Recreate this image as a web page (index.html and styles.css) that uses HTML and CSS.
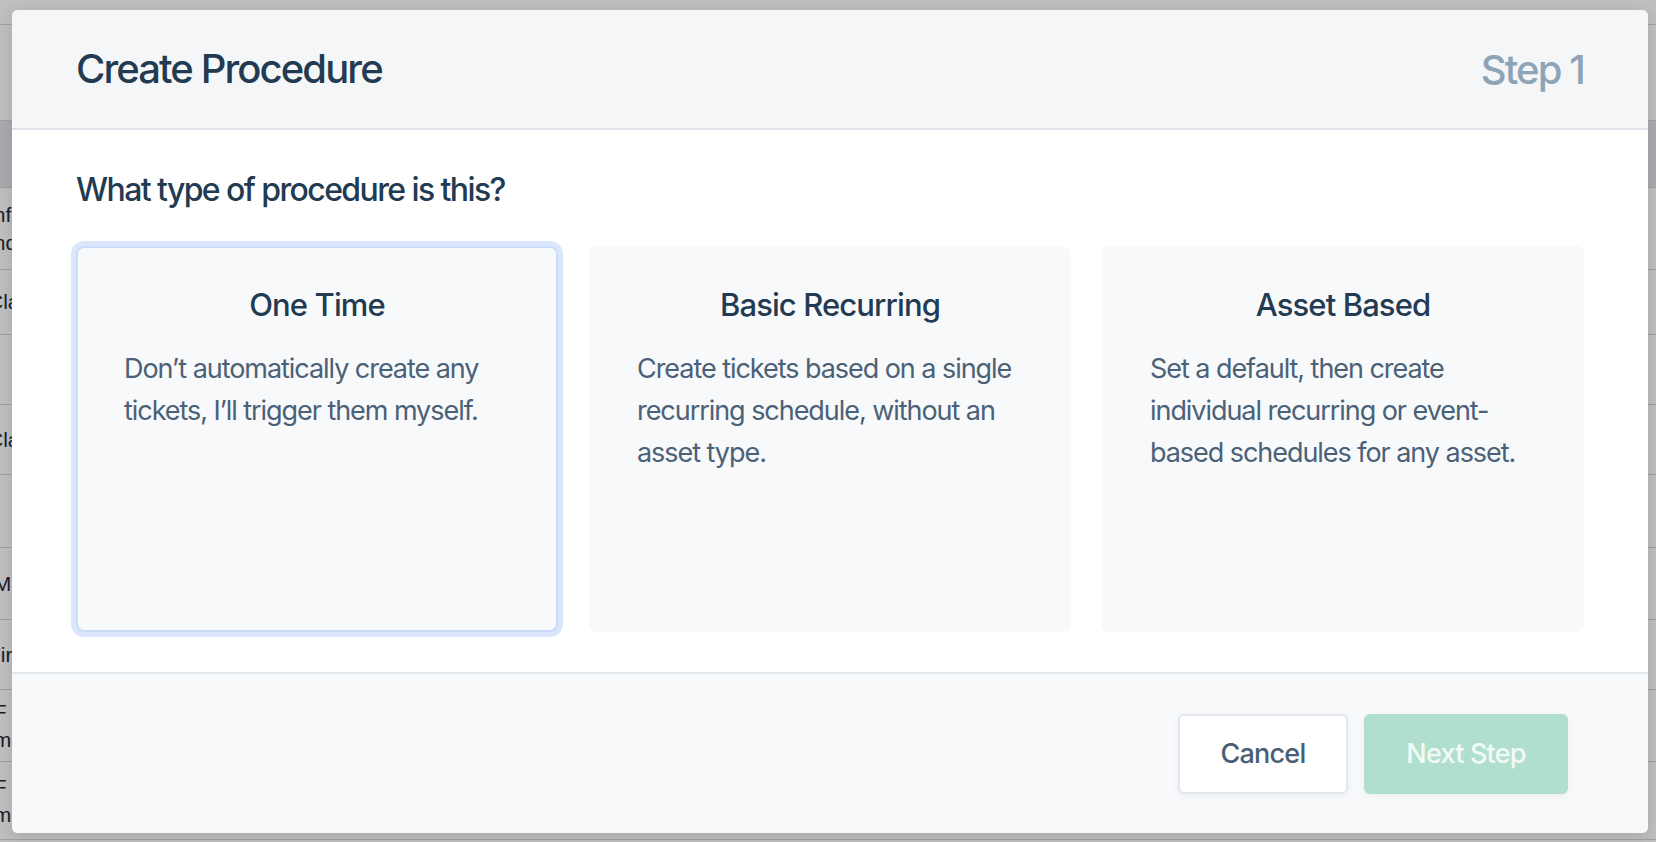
FILE: index.html
```html
<!DOCTYPE html>
<html lang="en">
<head>
<meta charset="utf-8">
<title>Create Procedure</title>
<link rel="stylesheet" href="styles.css">
</head>
<body>
<div class="page">
  <div class="topbar"></div>
  <div class="toolbar"></div>
  <div class="thead"></div>
  <div class="trow r1"><span class="cell">Info<br>Indi</span></div>
  <div class="trow r2"><span class="cell">Class</span></div>
  <div class="trow r3"><span class="cell"></span></div>
  <div class="trow r4"><span class="cell">Class</span></div>
  <div class="trow r5"><span class="cell"></span></div>
  <div class="trow r6"><span class="cell">IM</span></div>
  <div class="trow r7"><span class="cell">Fir</span></div>
  <div class="trow r8"><span class="cell">IF<br>Im</span></div>
  <div class="trow r9"><span class="cell">IF<br>Im</span></div>
</div>
<div class="overlay"></div>

<div class="modal">
  <header class="modal-header">
    <h1 class="modal-title">Create Procedure</h1>
    <span class="modal-step">Step 1</span>
  </header>

  <section class="modal-body">
    <h2 class="question">What type of procedure is this?</h2>
    <div class="options">
      <div class="option selected">
        <h3 class="option-title">One Time</h3>
        <p class="option-desc">Don’t automatically create any tickets, I’ll trigger them myself.</p>
      </div>
      <div class="option">
        <h3 class="option-title">Basic Recurring</h3>
        <p class="option-desc">Create tickets based on a single recurring schedule, without an asset type.</p>
      </div>
      <div class="option">
        <h3 class="option-title">Asset Based</h3>
        <p class="option-desc">Set a default, then create individual recurring or event-based schedules for any asset.</p>
      </div>
    </div>
  </section>

  <footer class="modal-footer">
    <button class="btn btn-cancel">Cancel</button>
    <button class="btn btn-next">Next Step</button>
  </footer>
</div>
</body>
</html>
```

FILE: styles.css
```css
* {
  box-sizing: border-box;
}

html, body {
  margin: 0;
  padding: 0;
}

body {
  width: 1656px;
  height: 842px;
  overflow: hidden;
  position: relative;
  background: #ffffff;
  font-family: "Inter", "Liberation Sans", sans-serif;
}

/* ---------- underlying page ---------- */
.page {
  width: 1656px;
  height: 842px;
  overflow: hidden;
  background: #ffffff;
  font-family: "Liberation Sans", Arial, sans-serif;
  color: #1e2b38;
}

.topbar {
  height: 25px;
  border-bottom: 1px solid #d4d8dc;
}

.toolbar {
  height: 96px;
  border-bottom: 1px solid #d4d8dc;
}

.thead {
  height: 67px;
  background: #e2e5e8;
  border-bottom: 1px solid #d0d4d8;
}

.trow {
  border-bottom: 1px solid #d4d8dc;
  display: flex;
  align-items: center;
  font-size: 21px;
  line-height: 28px;
}

.r1 { height: 82px; }
.r2 { height: 65px; }
.r3 { height: 70px; }
.r4 { height: 70px; }
.r5 { height: 73px; }
.r6 { height: 72px; }
.r7 { height: 70px; }
.r8 { height: 72px; }
.r9 { height: 78px; }

.cell {
  margin-left: -12px;
}

.overlay {
  position: absolute;
  inset: 0;
  background: rgba(0, 0, 0, 0.25);
}

/* ---------- modal ---------- */
.modal {
  position: absolute;
  left: 12px;
  top: 10px;
  width: 1636px;
  height: 823px;
  background: #ffffff;
  border-radius: 6px;
  overflow: hidden;
  display: flex;
  flex-direction: column;
  box-shadow: 0 4px 16px rgba(0, 0, 0, 0.12);
}

.modal-header {
  height: 120px;
  flex: none;
  padding: 0 64px;
  background: #f5f6f8;
  border-bottom: 2px solid #dfe5eb;
  display: flex;
  align-items: center;
  justify-content: space-between;
}

.modal-title,
.modal-step {
  margin: 0;
  font-size: 40px;
  line-height: 48px;
  font-weight: 500;
  letter-spacing: -1.9px;
}

.modal-title {
  color: #233b52;
}

.modal-step {
  color: #8da4b6;
  padding-top: 2px;
}

.modal-body {
  flex: 1;
  padding: 40px 64px 0;
}

.question {
  margin: 0;
  font-size: 32px;
  line-height: 40px;
  font-weight: 500;
  letter-spacing: -1.6px;
  color: #233b52;
}

.options {
  margin-top: 36px;
  display: grid;
  grid-template-columns: repeat(3, 1fr);
  gap: 31px;
}

.option {
  height: 386px;
  padding: 37px 46px 0;
  background: #f8f9fb;
  border: 2px solid #f8f9fb;
  border-radius: 8px;
}

.option.selected {
  border-color: #cbdcf8;
  box-shadow: 0 0 0 5px #d9e6fc;
}

.option-title {
  margin: 0;
  text-align: center;
  font-size: 31px;
  line-height: 40px;
  font-weight: 500;
  letter-spacing: -0.9px;
  color: #233b52;
}

.option-desc {
  margin: 23px -8px 0 0;
  font-size: 27px;
  line-height: 42px;
  font-weight: 400;
  letter-spacing: -1.05px;
  color: #4b6177;
}

.modal-footer {
  height: 161px;
  flex: none;
  padding: 0 80px;
  background: #f8f9fb;
  border-top: 2px solid #dfe6ec;
  display: flex;
  align-items: center;
  justify-content: flex-end;
  gap: 16px;
}

.btn {
  height: 80px;
  border-radius: 6px;
  font-family: "Inter", "Liberation Sans", sans-serif;
  font-size: 27px;
  font-weight: 500;
  letter-spacing: -0.8px;
  cursor: pointer;
  box-shadow: 0 2px 6px rgba(30, 50, 70, 0.06);
}

.btn-cancel {
  width: 170px;
  background: #ffffff;
  border: 2px solid #e1e7ed;
  color: #475e74;
}

.btn-next {
  width: 204px;
  background: #b1dfcf;
  border: none;
  color: #f1faf6;
}
```
